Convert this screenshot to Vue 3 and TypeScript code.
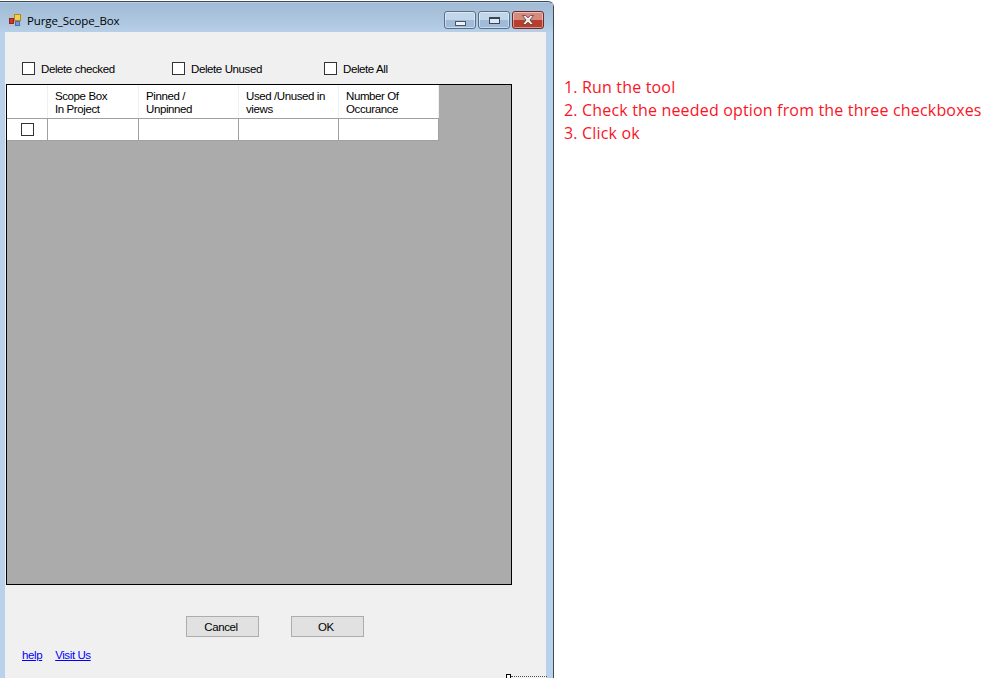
<script setup lang="ts">
const checks = [
  { label: 'Delete checked', cls: 'c1' },
  { label: 'Delete Unused', cls: 'c2' },
  { label: 'Delete All', cls: 'c3' },
]
const columns = [
  { w: 91, lines: ['Scope Box', 'In Project'] },
  { w: 100, lines: ['Pinned /', 'Unpinned'] },
  { w: 100, lines: ['Used /Unused in', 'views'] },
  { w: 100, lines: ['Number Of', 'Occurance'] },
]
const steps = ['1. Run the tool', '2. Check the needed option from the three checkboxes', '3. Click ok']
</script>

<template>
  <div class="page">
    <section class="window">
      <header class="titlebar">
        <svg class="appicon" width="13" height="13" viewBox="0 0 13 13">
          <rect x="0" y="0" width="13" height="13" fill="#c9b9a8" opacity="0.3" />
          <rect x="0.5" y="4.500" width="4" height="5" fill="#d8302a" stroke="#8a2a20" />
          <rect x="5.500" y="0.5" width="6" height="6" fill="#f6cf4a" stroke="#b08a20" />
          <rect x="6.500" y="7.500" width="4" height="4" fill="#6a9ce0" stroke="#4470b0" />
        </svg>
        <span class="title">Purge_Scope_Box</span>
        <div class="winbtns">
          <div class="wb">
            <span class="minglyph"></span>
          </div>
          <div class="wb">
            <span class="maxglyph"></span>
          </div>
          <div class="wb close">
            <svg width="12" height="10" viewBox="0 0 12 10">
              <path d="M0.5 0.5h3l2.500 2.200 2.500-2.200h3L8 5l3.500 4.500h-3L6 7.300 3.500 9.500h-3L4 5z" fill="#f2eeee" stroke="#5e3a3a" stroke-width="0.8" />
            </svg>
          </div>
        </div>
      </header>
      <div class="client">
        <div class="options">
          <label v-for="c in checks" :key="c.label" class="opt" :class="c.cls">
            <span class="box"></span>
            <span>{{ c.label }}</span>
          </label>
        </div>
        <div class="grid">
          <div class="table">
            <div class="row head">
              <div class="cell first"></div>
              <div v-for="c in columns" :key="c.lines[0]" class="cell textcell" :style="{ width: c.w + 'px' }">
                <div v-for="l in c.lines" :key="l" class="hl">{{ l }}</div>
              </div>
            </div>
            <div class="row data">
              <div class="cell first"><span class="box small"></span></div>
              <div v-for="c in columns" :key="c.lines[0]" class="cell" :style="{ width: c.w + 'px' }"></div>
            </div>
          </div>
        </div>
        <div class="actions">
          <button class="btn" type="button">Cancel</button>
          <button class="btn" type="button">OK</button>
        </div>
        <div class="links">
          <a class="link">help</a>
          <a class="link">Visit Us</a>
        </div>
        <div class="handle"><span class="grip"></span><span class="dots"></span></div>
      </div>
    </section>
    <ol class="steps">
      <li v-for="s in steps" :key="s">{{ s }}</li>
    </ol>
  </div>
</template>

<style>
html, body { margin: 0; background: #fff; }
</style>

<style scoped>
.page {
  width: 1000px;
  height: 678px;
  overflow: hidden;
  display: flex;
  font-family: "Liberation Sans", Arial, sans-serif;
  background: #fff;
}
.window {
  width: 554px;
  height: 677px;
  box-sizing: border-box;
  flex: none;
  padding-top: 1px;
  display: flex;
  flex-direction: column;
  border-right: 1px solid #3c4a58;
  border-top: 1px solid #3c4a58;
  border-top-right-radius: 6px;
  background: #b9d1ea;
  margin-top: 1px;
}
.titlebar {
  height: 29px;
  flex: none;
  display: flex;
  align-items: flex-start;
  padding: 0 9px 0 9px;
  background: linear-gradient(#a2bbd4, #adc6df 60%, #b7cfe7);
}
.appicon { flex: none; margin-top: 11px; }
.title {
  margin-left: 5px;
  margin-top: 10px;
  font-family: "Open Sans", sans-serif;
  font-size: 11.500px;
  line-height: 16px;
  letter-spacing: -0.1px;
  color: #000;
}
.winbtns { margin-left: auto; display: flex; gap: 2px; margin-top: 8px; }
.wb {
  width: 32px;
  height: 18px;
  box-sizing: border-box;
  border: 1px solid #55708e;
  border-radius: 3px;
  box-shadow: inset 0 0 0 1px rgba(255, 255, 255, 0.45);
  background: linear-gradient(#c3d5e8 0 50%, #a0bbd7 50% 100%);
  display: flex;
  align-items: center;
  justify-content: center;
}
.wb.close {
  border-color: #6e2a2a;
  background: linear-gradient(#d68a7e 0 50%, #b63e2a 50% 100%);
}
.minglyph {
  width: 9px;
  height: 3px;
  margin-top: 6px;
  background: #eef2f6;
  border: 1px solid #46586c;
}
.maxglyph {
  width: 9px;
  height: 4px;
  margin-top: 1px;
  background: #dfe8f1;
  border: 1px solid #33465a;
  border-top-width: 2px;
}
.client {
  position: relative;
  flex: 1;
  margin: 0 7px 0 5px;
  background: #f0f0f0;
  font-size: 11.500px;
  color: #000;
  letter-spacing: -0.4px;
}
.options {
  display: flex;
  padding: 26px 0 0 17px;
  height: 21px;
  margin-bottom: 5px;
  align-items: center;
}
.opt { display: flex; align-items: center; gap: 6px; }
.c1 { width: 150px; }
.c2 { width: 152px; }
.box {
  width: 11px;
  height: 11px;
  display: block;
  flex: none;
  background: #fff;
  border: 1px solid #333;
}
.box.small { margin: 0 auto; }
.grid {
  margin-left: 1px;
  width: 506px;
  height: 501px;
  box-sizing: border-box;
  border: 1px solid #000;
  background: #ababab;
}
.table { width: 432px; background: #fff; }
.row { display: flex; }
.head { height: 33px; border-bottom: 1px solid #a0a0a0; }
.data { height: 21px; border-bottom: 1px solid #a0a0a0; }
.cell {
  box-sizing: border-box;
  flex: none;
  border-right: 1px solid #a0a0a0;
  height: 100%;
}
.head .cell { border-right-color: #f0f0f0; }
.textcell { padding: 5px 0 0 7px; line-height: 13px; }
.first { width: 41px; display: flex; align-items: center; }
.hl { white-space: nowrap; }
.actions {
  display: flex;
  gap: 32px;
  padding: 31px 0 0 181px;
}
.btn {
  width: 73px;
  height: 21px;
  box-sizing: border-box;
  padding: 0 3px 0 0;
  border: 1px solid #adadad;
  background: #e1e1e1;
  font: inherit;
  letter-spacing: inherit;
  color: #000;
}
.links {
  display: flex;
  gap: 13px;
  padding: 12px 0 0 17px;
}
.link { color: #0000ff; text-decoration: underline; }
.handle {
  position: absolute;
  right: -1px;
  bottom: 0;
  display: flex;
  align-items: center;
  height: 4px;
}
.grip { width: 3px; height: 3px; border: 1px solid #000; background: #fff; border-bottom: none; }
.dots { width: 36px; border-top: 1px dotted #555; }
.steps {
  list-style: none;
  margin: 0;
  padding: 76px 0 0 10px;
  font-family: "Open Sans", sans-serif;
  font-size: 16px;
  letter-spacing: 0.17px;
  line-height: 23px;
  color: #fa1426;
  white-space: nowrap;
}
</style>
